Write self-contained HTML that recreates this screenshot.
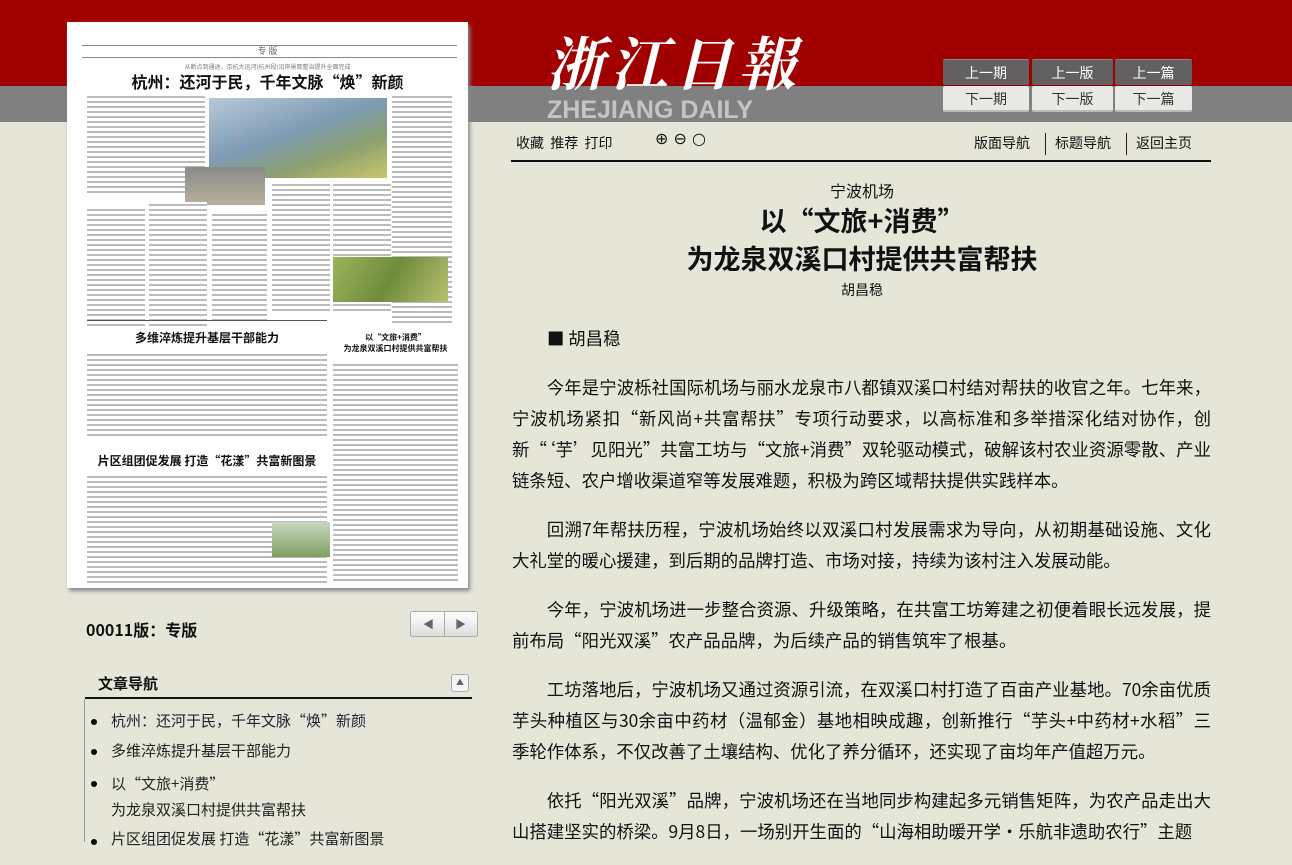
<!DOCTYPE html>
<html><head><meta charset="utf-8"><style>
*{margin:0;padding:0;box-sizing:border-box}
body{width:1292px;height:842px;overflow:hidden;background:#e6e6d8;font-family:"Noto Sans CJK SC","Liberation Sans",sans-serif;color:#111;position:relative}
.red{position:absolute;left:0;top:0;width:1292px;height:86px;background:#a00000}
.gray{position:absolute;left:0;top:86px;width:1292px;height:36px;background:#808080}
.logo{position:absolute;left:546px;top:28px;font-family:"Noto Serif CJK SC",serif;font-size:58px;color:#fff;letter-spacing:6px;font-weight:700;font-style:italic;line-height:64px}
.en{position:absolute;left:547px;top:96px;font-family:"Liberation Sans",sans-serif;font-size:25px;font-weight:700;color:#c4c4c4;line-height:28px}
.btn{position:absolute;height:26px;font-size:14px;text-align:center;line-height:26px;border-radius:2px}
.up{background:#626060;color:#fff;top:59px;border-top:1px solid #888}
.dn{background:#eae8e4;color:#333;top:86px;border-bottom:2px solid #bbb}
.paper{position:absolute;left:67px;top:22px;width:401px;height:566px;background:#fff;box-shadow:2px 3px 4px #888;overflow:hidden}
.tl{position:absolute;background:repeating-linear-gradient(#fff 0 2px,#bbb 2px 4px,#fff 4px 5px)}
.nav{position:absolute;font-size:14px;top:133px}
.hr{position:absolute;left:511px;top:160px;width:700px;height:2px;background:#111}
.art{position:absolute;left:512px;top:323px;width:699px;font-size:17.4px;line-height:31px;text-align:justify}
.art p{text-indent:2em;margin-bottom:18px}
.li{position:absolute;left:111px;font-size:15px;color:#222}
.dot{position:absolute;left:91px;width:6px;height:6px;border-radius:3px;background:#000}
</style></head><body>
<div class="red"></div><div class="gray"></div>
<div class="logo">浙江日報</div>
<div class="en">ZHEJIANG DAILY</div>
<div class="btn up" style="left:943px;width:86px">上一期</div><div class="btn up" style="left:1032px;width:81px">上一版</div><div class="btn up" style="left:1115px;width:77px">上一篇</div>
<div class="btn dn" style="left:943px;width:86px">下一期</div><div class="btn dn" style="left:1032px;width:81px">下一版</div><div class="btn dn" style="left:1115px;width:77px">下一篇</div>

<div class="paper">
 <div style="position:absolute;left:15px;top:23px;width:375px;height:1px;background:#888"></div>
 <div style="position:absolute;left:0;top:22px;width:401px;text-align:center;font-size:9px;color:#666">专 版</div>
 <div style="position:absolute;left:15px;top:35px;width:375px;height:1px;background:#888"></div>
 <div style="position:absolute;left:0;top:40px;width:401px;text-align:center;font-size:6px;color:#777">从断点到通途，京杭大运河(杭州段)沿岸景观整治提升全面完成</div>
 <div style="position:absolute;left:0;top:47px;width:401px;text-align:center;font-size:16px;font-weight:700">杭州：还河于民，千年文脉“焕”新颜</div>
 <div class="tl" style="left:20px;top:72px;width:118px;height:100px"></div>
 <div style="position:absolute;left:142px;top:76px;width:178px;height:80px;background:linear-gradient(160deg,#b8c9d8,#7d9bb3 45%,#8aa070 70%,#c9c66a)"></div>
 <div style="position:absolute;left:118px;top:145px;width:80px;height:38px;background:linear-gradient(#8a8a8a,#b7b09a)"></div>
 <div class="tl" style="left:325px;top:72px;width:60px;height:230px"></div>
 <div class="tl" style="left:20px;top:185px;width:58px;height:120px"></div>
 <div class="tl" style="left:82px;top:180px;width:58px;height:125px"></div>
 <div class="tl" style="left:145px;top:190px;width:55px;height:110px"></div>
 <div class="tl" style="left:205px;top:160px;width:58px;height:130px"></div>
 <div class="tl" style="left:266px;top:160px;width:58px;height:130px"></div>
 <div style="position:absolute;left:266px;top:235px;width:115px;height:45px;background:linear-gradient(120deg,#9cb45a,#6e8c3c,#b8c070)"></div>
 <div style="position:absolute;left:20px;top:298px;width:240px;height:1px;background:#555"></div>
 <div style="position:absolute;left:20px;top:307px;width:240px;text-align:center;font-size:12px;font-weight:700">多维淬炼提升基层干部能力</div>
 <div style="position:absolute;left:266px;top:310px;width:125px;text-align:center;font-size:8px;font-weight:700">以“文旅+消费”<br>为龙泉双溪口村提供共富帮扶</div>
 <div class="tl" style="left:20px;top:330px;width:240px;height:85px"></div>
 <div class="tl" style="left:266px;top:340px;width:125px;height:220px"></div>
 <div style="position:absolute;left:20px;top:430px;width:240px;text-align:center;font-size:12px;font-weight:700">片区组团促发展 打造“花漾”共富新图景</div>
 <div class="tl" style="left:20px;top:452px;width:240px;height:110px"></div>
 <div style="position:absolute;left:205px;top:500px;width:58px;height:35px;background:linear-gradient(#c8d8c0,#7fa060)"></div>
</div>

<div style="position:absolute;left:86px;top:617px;font-size:16px;font-weight:700">00011版：专版</div>
<div style="position:absolute;left:410px;top:611px;width:68px;height:26px;border:1px solid #aaa;border-radius:3px;background:linear-gradient(#fff,#ddd);font-size:11px;color:#666;line-height:24px"><span style="position:absolute;left:12px">◀</span><span style="position:absolute;left:33px;top:0;width:1px;height:24px;background:#aaa"></span><span style="position:absolute;left:44px">▶</span></div>
<div style="position:absolute;left:98px;top:673px;font-size:15px;font-weight:700">文章导航</div>
<div style="position:absolute;left:451px;top:674px;width:18px;height:18px;border:1px solid #aaa;border-radius:3px;background:#f4f4f4;font-size:8px;color:#666;text-align:center;line-height:16px">▲</div>
<div style="position:absolute;left:85px;top:697px;width:387px;height:2px;background:#111"></div>
<div style="position:absolute;left:84px;top:699px;width:1px;height:143px;background:#999"></div>
<div class="dot" style="top:719px"></div><div class="li" style="top:710px;color:#223">杭州：还河于民，千年文脉“焕”新颜</div>
<div class="dot" style="top:749px"></div><div class="li" style="top:740px">多维淬炼提升基层干部能力</div>
<div class="dot" style="top:781px"></div><div class="li" style="top:771px;line-height:26px">以“文旅+消费”<br>为龙泉双溪口村提供共富帮扶</div>
<div class="dot" style="top:839px"></div><div class="li" style="top:828px">片区组团促发展 打造“花漾”共富新图景</div>

<div class="nav" style="left:516px">收藏 &nbsp;推荐 &nbsp;打印</div>
<div class="nav" style="left:655px;top:129px;font-size:16px;font-family:'DejaVu Sans',sans-serif">⊕ ⊖ ○</div>
<div class="nav" style="left:974px">版面导航</div>
<div style="position:absolute;left:1045px;top:133px;width:1px;height:22px;background:#222"></div>
<div class="nav" style="left:1055px">标题导航</div>
<div style="position:absolute;left:1126px;top:133px;width:1px;height:22px;background:#222"></div>
<div class="nav" style="left:1136px">返回主页</div>
<div class="hr"></div>

<div style="position:absolute;left:512px;top:178px;width:700px;text-align:center;font-size:16px">宁波机场</div>
<div style="position:absolute;left:512px;top:201px;width:700px;text-align:center;font-size:27px;font-weight:700;line-height:38px">以“文旅+消费”<br>为龙泉双溪口村提供共富帮扶</div>
<div style="position:absolute;left:512px;top:280px;width:700px;text-align:center;font-size:14px">胡昌稳</div>

<div class="art">
<p style="margin-bottom:18px;text-indent:35px">■ 胡昌稳</p>
<p>今年是宁波栎社国际机场与丽水龙泉市八都镇双溪口村结对帮扶的收官之年。七年来，宁波机场紧扣“新风尚+共富帮扶”专项行动要求，以高标准和多举措深化结对协作，创新“‘芋’见阳光”共富工坊与“文旅+消费”双轮驱动模式，破解该村农业资源零散、产业链条短、农户增收渠道窄等发展难题，积极为跨区域帮扶提供实践样本。</p>
<p>回溯7年帮扶历程，宁波机场始终以双溪口村发展需求为导向，从初期基础设施、文化大礼堂的暖心援建，到后期的品牌打造、市场对接，持续为该村注入发展动能。</p>
<p>今年，宁波机场进一步整合资源、升级策略，在共富工坊筹建之初便着眼长远发展，提前布局“阳光双溪”农产品品牌，为后续产品的销售筑牢了根基。</p>
<p>工坊落地后，宁波机场又通过资源引流，在双溪口村打造了百亩产业基地。70余亩优质芋头种植区与30余亩中药材（温郁金）基地相映成趣，创新推行“芋头+中药材+水稻”三季轮作体系，不仅改善了土壤结构、优化了养分循环，还实现了亩均年产值超万元。</p>
<p>依托“阳光双溪”品牌，宁波机场还在当地同步构建起多元销售矩阵，为农产品走出大山搭建坚实的桥梁。9月8日，一场别开生面的“山海相助暖开学·乐航非遗助农行”主题</p>
</div>
</body></html>
